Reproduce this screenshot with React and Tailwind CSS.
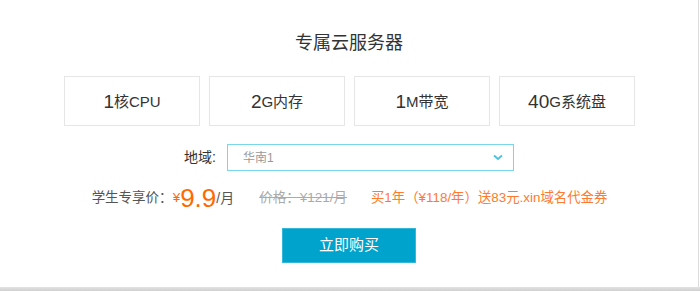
export default function App() {
  const font = { fontFamily: '"Liberation Sans", "Noto Sans CJK SC", sans-serif' };
  const boxes = [
    ["1", "核CPU"],
    ["2", "G内存"],
    ["1", "M带宽"],
    ["40", "G系统盘"],
  ];
  return (
    <div className="w-[700px] h-[291px] bg-white flex flex-col" style={font}>
      <div className="w-[699px] h-[287px] border-r border-[#dcdcdc] flex flex-col items-center">
        <div className="pt-[31px] h-[55px] text-[18px] leading-[24px] text-[#333]">专属云服务器</div>
        <div className="mt-[21px] flex gap-[9px] pl-[1px]">
          {boxes.map(([n, u], i) => (
            <div
              key={i}
              className="w-[136px] h-[50px] border border-[#e6e6e6] flex items-center justify-center text-[#333]"
            >
              <span className="text-[19px] leading-none">{n}</span>
              <span className="text-[15px] leading-none">{u}</span>
            </div>
          ))}
        </div>
        <div className="mt-[18px] flex items-center h-[27px]">
          <span className="text-[14px] text-[#333] mr-[11px]">地域:</span>
          <div className="w-[287px] h-[27px] border border-[#7ad6ec] flex items-center justify-between pl-[15px] pr-[10px]">
            <span className="text-[12px] text-[#999]">华南1</span>
            <svg width="10" height="7" viewBox="0 0 10 7">
              <path d="M1 1.5 L5 5 L9 1.5" fill="none" stroke="#4cc3e0" strokeWidth="2" />
            </svg>
          </div>
        </div>
        <div className="mt-[12px] h-[30px] flex items-center text-[13.5px] pl-[1px]">
          <span className="text-[#555]">学生专享价：</span>
          <span className="text-[#ff6a00]">¥</span>
          <span className="text-[#ff6a00] text-[26px] leading-none">9.9</span>
          <span className="text-[#555] text-[14px]">/月</span>
          <span className="ml-[25px] text-[#aaa] line-through">价格：¥121/月</span>
          <span className="ml-[24px] text-[#ff7a2e] text-[13.4px]">买1年（¥118/年）送83元.xin域名代金券</span>
        </div>
        <button className="mt-[15px] w-[134px] h-[35px] bg-[#00a3cc] border border-[#33b8da] text-white text-[15px]">
          立即购买
        </button>
      </div>
      <div className="h-[4px] w-full bg-gradient-to-b from-[#e3e3e3] to-[#cfcfcf]" />
    </div>
  );
}
